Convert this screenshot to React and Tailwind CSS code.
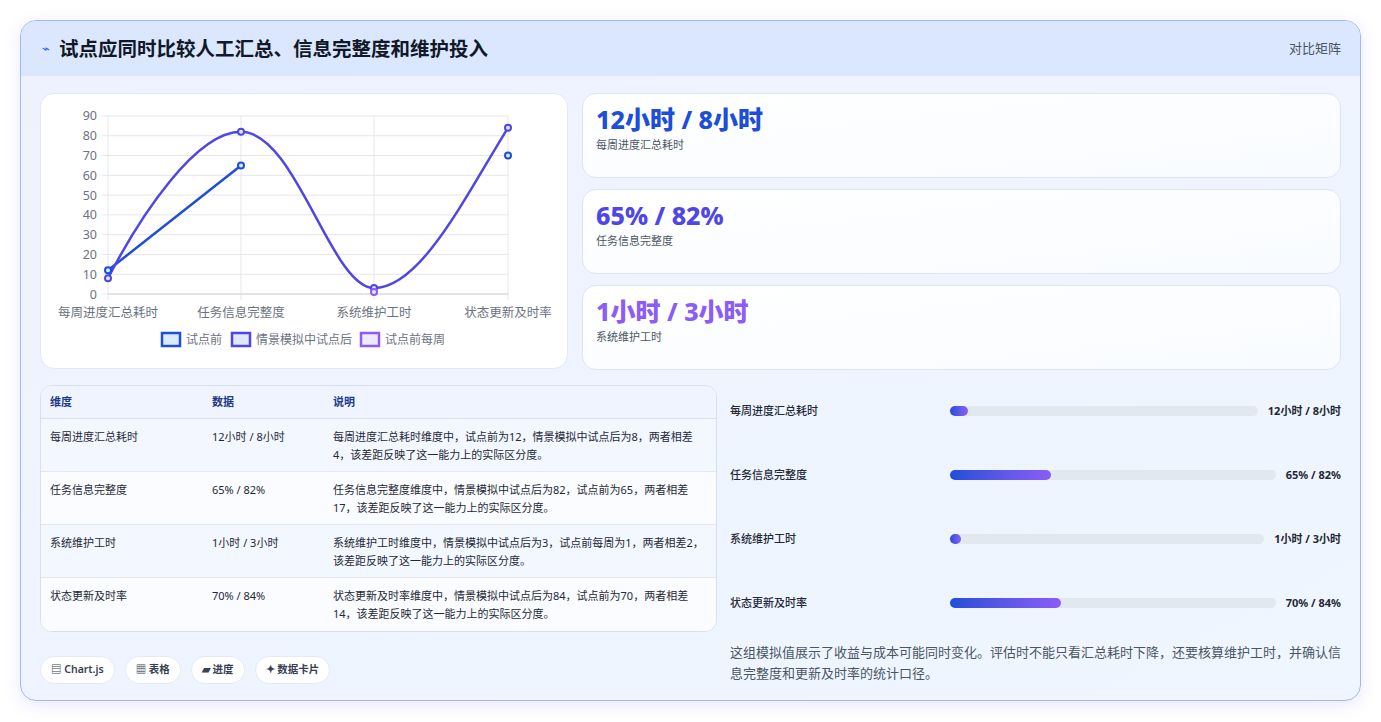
import React from "react";

const F = { fontFamily: '"Noto Sans", "Noto Sans CJK SC", sans-serif' };
const Y = (v) => 293 - v * 1.978;
const XS = [107, 240, 373, 507];

function Chart() {
  const labels = ["每周进度汇总耗时", "任务信息完整度", "系统维护工时", "状态更新及时率"];
  return (
    <svg width="527" height="275" viewBox="40 93 527 275" className="block">
      {[0, 10, 20, 30, 40, 50, 60, 70, 80, 90].map((v) => (
        <g key={v}>
          <line x1="101" x2="507" y1={Y(v)} y2={Y(v)} stroke="#e5e7eb" strokeWidth="1" />
          <text x="96" y={Y(v) + 4.5} textAnchor="end" fontSize="12.5" fill="#6b7280" style={F}>{v}</text>
        </g>
      ))}
      {XS.map((x) => (
        <line key={x} x1={x} x2={x} y1={Y(90)} y2={299} stroke="#e5e7eb" />
      ))}
      <line x1="107" x2="507" y1="293" y2="293" stroke="#d1d5db" />
      {labels.map((l, i) => (
        <text key={l} x={XS[i]} y="316" textAnchor="middle" fontSize="12.5" fill="#6b7280" style={F}>{l}</text>
      ))}
      <path d={`M107,${Y(12)} L240,${Y(65)}`} stroke="#1d4ed8" strokeWidth="2.5" fill="none" />
      <path
        d={`M107,${Y(8)} C140,${Y(40)} 195,${Y(82)} 240,${Y(82)} C295,${Y(82)} 330,${Y(3)} 373,${Y(3)} C420,${Y(3)} 465,${Y(50)} 507,${Y(84)}`}
        stroke="#4f46e5" strokeWidth="2.5" fill="none"
      />
      {[[107, 12], [240, 65], [507, 70]].map(([x, v]) => (
        <circle key={"a" + x} cx={x} cy={Y(v)} r="3" fill="#dbeafe" stroke="#1d4ed8" strokeWidth="2" />
      ))}
      {[[107, 8], [240, 82], [373, 3], [507, 84]].map(([x, v]) => (
        <circle key={"b" + x} cx={x} cy={Y(v)} r="3" fill="#e0e7ff" stroke="#4f46e5" strokeWidth="2" />
      ))}
      <circle cx="373" cy={Y(1)} r="3" fill="#ede9fe" stroke="#8b5cf6" strokeWidth="2" />
      {[
        [161, "#1d4ed8", "#dbeafe", "试点前"],
        [231, "#4f46e5", "#e0e7ff", "情景模拟中试点后"],
        [360, "#8b5cf6", "#ede9fe", "试点前每周"],
      ].map(([x, s, f, t]) => (
        <g key={t}>
          <rect x={x} y="332" width="18" height="13" fill={f} stroke={s} strokeWidth="2.5" />
          <text x={x + 24} y="343" fontSize="12" fill="#6b7280" style={F}>{t}</text>
        </g>
      ))}
    </svg>
  );
}

const rows = [
  ["每周进度汇总耗时", "12小时 / 8小时", "每周进度汇总耗时维度中，试点前为12，情景模拟中试点后为8，两者相差4，该差距反映了这一能力上的实际区分度。"],
  ["任务信息完整度", "65% / 82%", "任务信息完整度维度中，情景模拟中试点后为82，试点前为65，两者相差17，该差距反映了这一能力上的实际区分度。"],
  ["系统维护工时", "1小时 / 3小时", "系统维护工时维度中，情景模拟中试点后为3，试点前每周为1，两者相差2，该差距反映了这一能力上的实际区分度。"],
  ["状态更新及时率", "70% / 84%", "状态更新及时率维度中，情景模拟中试点后为84，试点前为70，两者相差14，该差距反映了这一能力上的实际区分度。"],
];

const bars = [
  ["每周进度汇总耗时", "12小时 / 8小时", 6],
  ["任务信息完整度", "65% / 82%", 31],
  ["系统维护工时", "1小时 / 3小时", 3.5],
  ["状态更新及时率", "70% / 84%", 34],
];

export default function App() {
  return (
    <div className="w-[1381px] h-[722px] bg-white pt-[20px] px-[20px]" style={F}>
      <div className="w-[1341px] h-[681px] rounded-[16px] border border-[#a5b4fc] bg-gradient-to-br from-[#eef2ff] to-[#eff6ff] overflow-hidden shadow-[0_4px_16px_rgba(99,102,241,0.15)]">
        <div className="h-[55px] bg-[#dbe7fe] flex items-center justify-between pl-[21px] pr-[19px]">
          <div className="flex items-center gap-[9px]">
            <span className="text-[#2563eb] text-[13px]">⌁</span>
            <span className="text-[19.5px] font-bold text-[#111827]">试点应同时比较人工汇总、信息完整度和维护投入</span>
          </div>
          <span className="text-[13px] text-[#4b5563]">对比矩阵</span>
        </div>
        <div className="px-[19px] pt-[17px]">
          <div className="flex gap-[14px]">
            <div className="w-[528px] h-[276px] bg-white rounded-[14px] border border-[#e0e7ff]">
              <Chart />
            </div>
            <div className="flex-1 flex flex-col gap-[11px]">
              {[
                ["12小时 / 8小时", "每周进度汇总耗时", "text-[#1d4ed8]"],
                ["65% / 82%", "任务信息完整度", "text-[#4f46e5]"],
                ["1小时 / 3小时", "系统维护工时", "text-[#8b5cf6]"],
              ].map(([v, l, c]) => (
                <div key={l} className="h-[85px] rounded-[14px] border border-[#dbe4fb] bg-gradient-to-br from-white to-[#f8fbff] px-[13px] pt-[8px]">
                  <div className={`text-[25px] font-extrabold leading-[34px] ${c}`}>{v}</div>
                  <div className="text-[11px] text-[#4b5563] mt-[1px]">{l}</div>
                </div>
              ))}
            </div>
          </div>
          <div className="flex gap-[12px] mt-[15px]">
            <div className="w-[677px]">
              <div className="rounded-[12px] border border-[#d8dff0] bg-white overflow-hidden">
                <div className="flex h-[33px] items-center bg-[#eff4ff] border-b border-[#d8dff0] text-[11px] font-semibold text-[#1e3a8a]">
                  <div className="w-[171px] pl-[9px]">维度</div>
                  <div className="w-[121px]">数据</div>
                  <div className="flex-1">说明</div>
                </div>
                {rows.map((r, i) => (
                  <div key={r[0]} className={`flex h-[53px] pt-[9px] text-[11px] text-[#1f2937] leading-[18px] ${i < 3 ? "border-b border-[#e5e7eb]" : ""} ${i % 2 === 0 ? "bg-[#f3f7ff]" : "bg-[#fafcff]"}`}>
                    <div className="w-[171px] pl-[9px]">{r[0]}</div>
                    <div className="w-[121px]">{r[1]}</div>
                    <div className="flex-1 pr-[6px]">{r[2]}</div>
                  </div>
                ))}
              </div>
              <div className="flex gap-[10px] mt-[24px]">
                {["▤ Chart.js", "▦ 表格", "▰ 进度", "✦ 数据卡片"].map((t) => (
                  <span key={t} className="h-[28px] px-[10px] flex items-center rounded-full bg-white border border-[#e5e9f5] text-[10.5px] font-semibold text-[#374151]">{t}</span>
                ))}
              </div>
            </div>
            <div className="flex-1 pl-[1px] -mt-[6px]">
              {bars.map(([l, v, p]) => (
                <div key={l} className="flex items-center h-[64px] text-[11px]">
                  <div className="w-[220px] text-[#1f2937] font-medium">{l}</div>
                  <div className="flex-1 h-[10px] rounded-full bg-[#e2e8f0] mr-[10px]">
                    <div className="h-full rounded-full bg-gradient-to-r from-[#1d4ed8] to-[#8b5cf6]" style={{ width: `${p}%` }} />
                  </div>
                  <div className="font-bold text-[#1f2937] text-right whitespace-nowrap">{v}</div>
                </div>
              ))}
              <p className="mt-[7px] text-[13px] leading-[21px] text-[#4b5563]">这组模拟值展示了收益与成本可能同时变化。评估时不能只看汇总耗时下降，还要核算维护工时，并确认信息完整度和更新及时率的统计口径。</p>
            </div>
          </div>
        </div>
      </div>
    </div>
  );
}
